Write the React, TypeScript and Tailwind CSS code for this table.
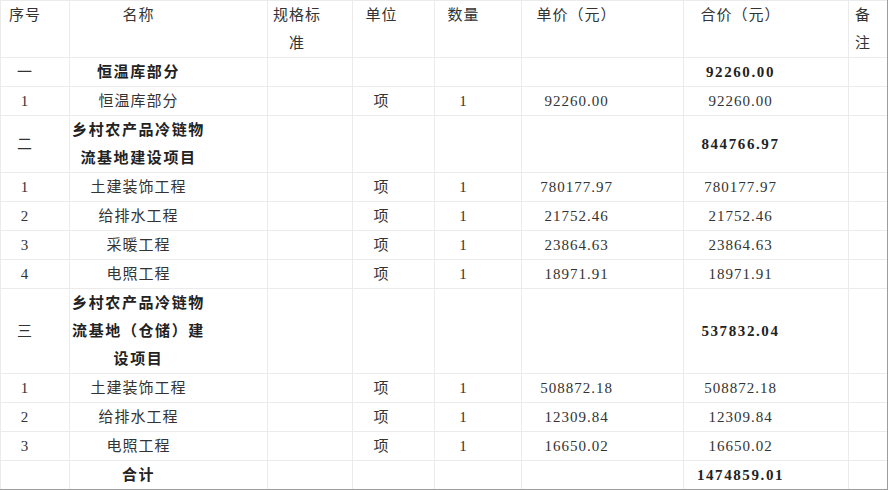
const cols = [
  "pr-[20px]",
  "pr-[60px]",
  "pr-[26px]",
  "pr-[24px]",
  "pr-[29px]",
  "pr-[52px]",
  "pr-[51px]",
  "pr-[10px]",
];

type Row = { cells: string[]; bold?: boolean };

const header = ["序号", "名称", "规格标\n准", "单位", "数量", "单价（元）", "合价（元）", "备\n注"];

const rows: Row[] = [
  { cells: ["一", "恒温库部分", "", "", "", "", "92260.00", ""], bold: true },
  { cells: ["1", "恒温库部分", "", "项", "1", "92260.00", "92260.00", ""] },
  { cells: ["二", "乡村农产品冷链物\n流基地建设项目", "", "", "", "", "844766.97", ""], bold: true },
  { cells: ["1", "土建装饰工程", "", "项", "1", "780177.97", "780177.97", ""] },
  { cells: ["2", "给排水工程", "", "项", "1", "21752.46", "21752.46", ""] },
  { cells: ["3", "采暖工程", "", "项", "1", "23864.63", "23864.63", ""] },
  { cells: ["4", "电照工程", "", "项", "1", "18971.91", "18971.91", ""] },
  { cells: ["三", "乡村农产品冷链物\n流基地（仓储）建\n设项目", "", "", "", "", "537832.04", ""], bold: true },
  { cells: ["1", "土建装饰工程", "", "项", "1", "508872.18", "508872.18", ""] },
  { cells: ["2", "给排水工程", "", "项", "1", "12309.84", "12309.84", ""] },
  { cells: ["3", "电照工程", "", "项", "1", "16650.02", "16650.02", ""] },
  { cells: ["", "合计", "", "", "", "", "1474859.01", ""], bold: true },
];

function Lines({ text }: { text: string }) {
  const parts = text.split("\n");
  return (
    <>
      {parts.map((p, i) => (
        <span key={i} className="block whitespace-nowrap">
          {p}
        </span>
      ))}
    </>
  );
}

export default function App() {
  return (
    <div
      className="w-[888px] h-[490px] bg-white overflow-hidden"
      style={{ fontFamily: '"Liberation Serif", "Noto Sans CJK SC", serif' }}
    >
      <div className="w-[888px] h-[490px] border-r border-b border-[#9c9c9c]">
        <div className="grid grid-cols-[68px_197px_84px_81px_86px_161px_164px_38px] gap-px bg-[#ebebeb] pt-px pl-px text-[15px] leading-[28px] text-[#333]">
          {header.map((h, i) => (
            <div key={i} className={`bg-white flex items-start justify-center text-center tracking-[1px] ${cols[i]}`}>
              <div>
                <Lines text={h} />
              </div>
            </div>
          ))}
          {rows.map((r, ri) =>
            r.cells.map((c, ci) => {
              const bold = r.bold && ci !== 0;
              return (
                <div
                  key={`${ri}-${ci}`}
                  className={`bg-white flex items-center justify-center text-center ${cols[ci]} ${
                    bold ? "font-bold tracking-[1.6px] text-[#222]" : "tracking-[1px]"
                  }`}
                >
                  <div>
                    <Lines text={c} />
                  </div>
                </div>
              );
            })
          )}
        </div>
      </div>
    </div>
  );
}
